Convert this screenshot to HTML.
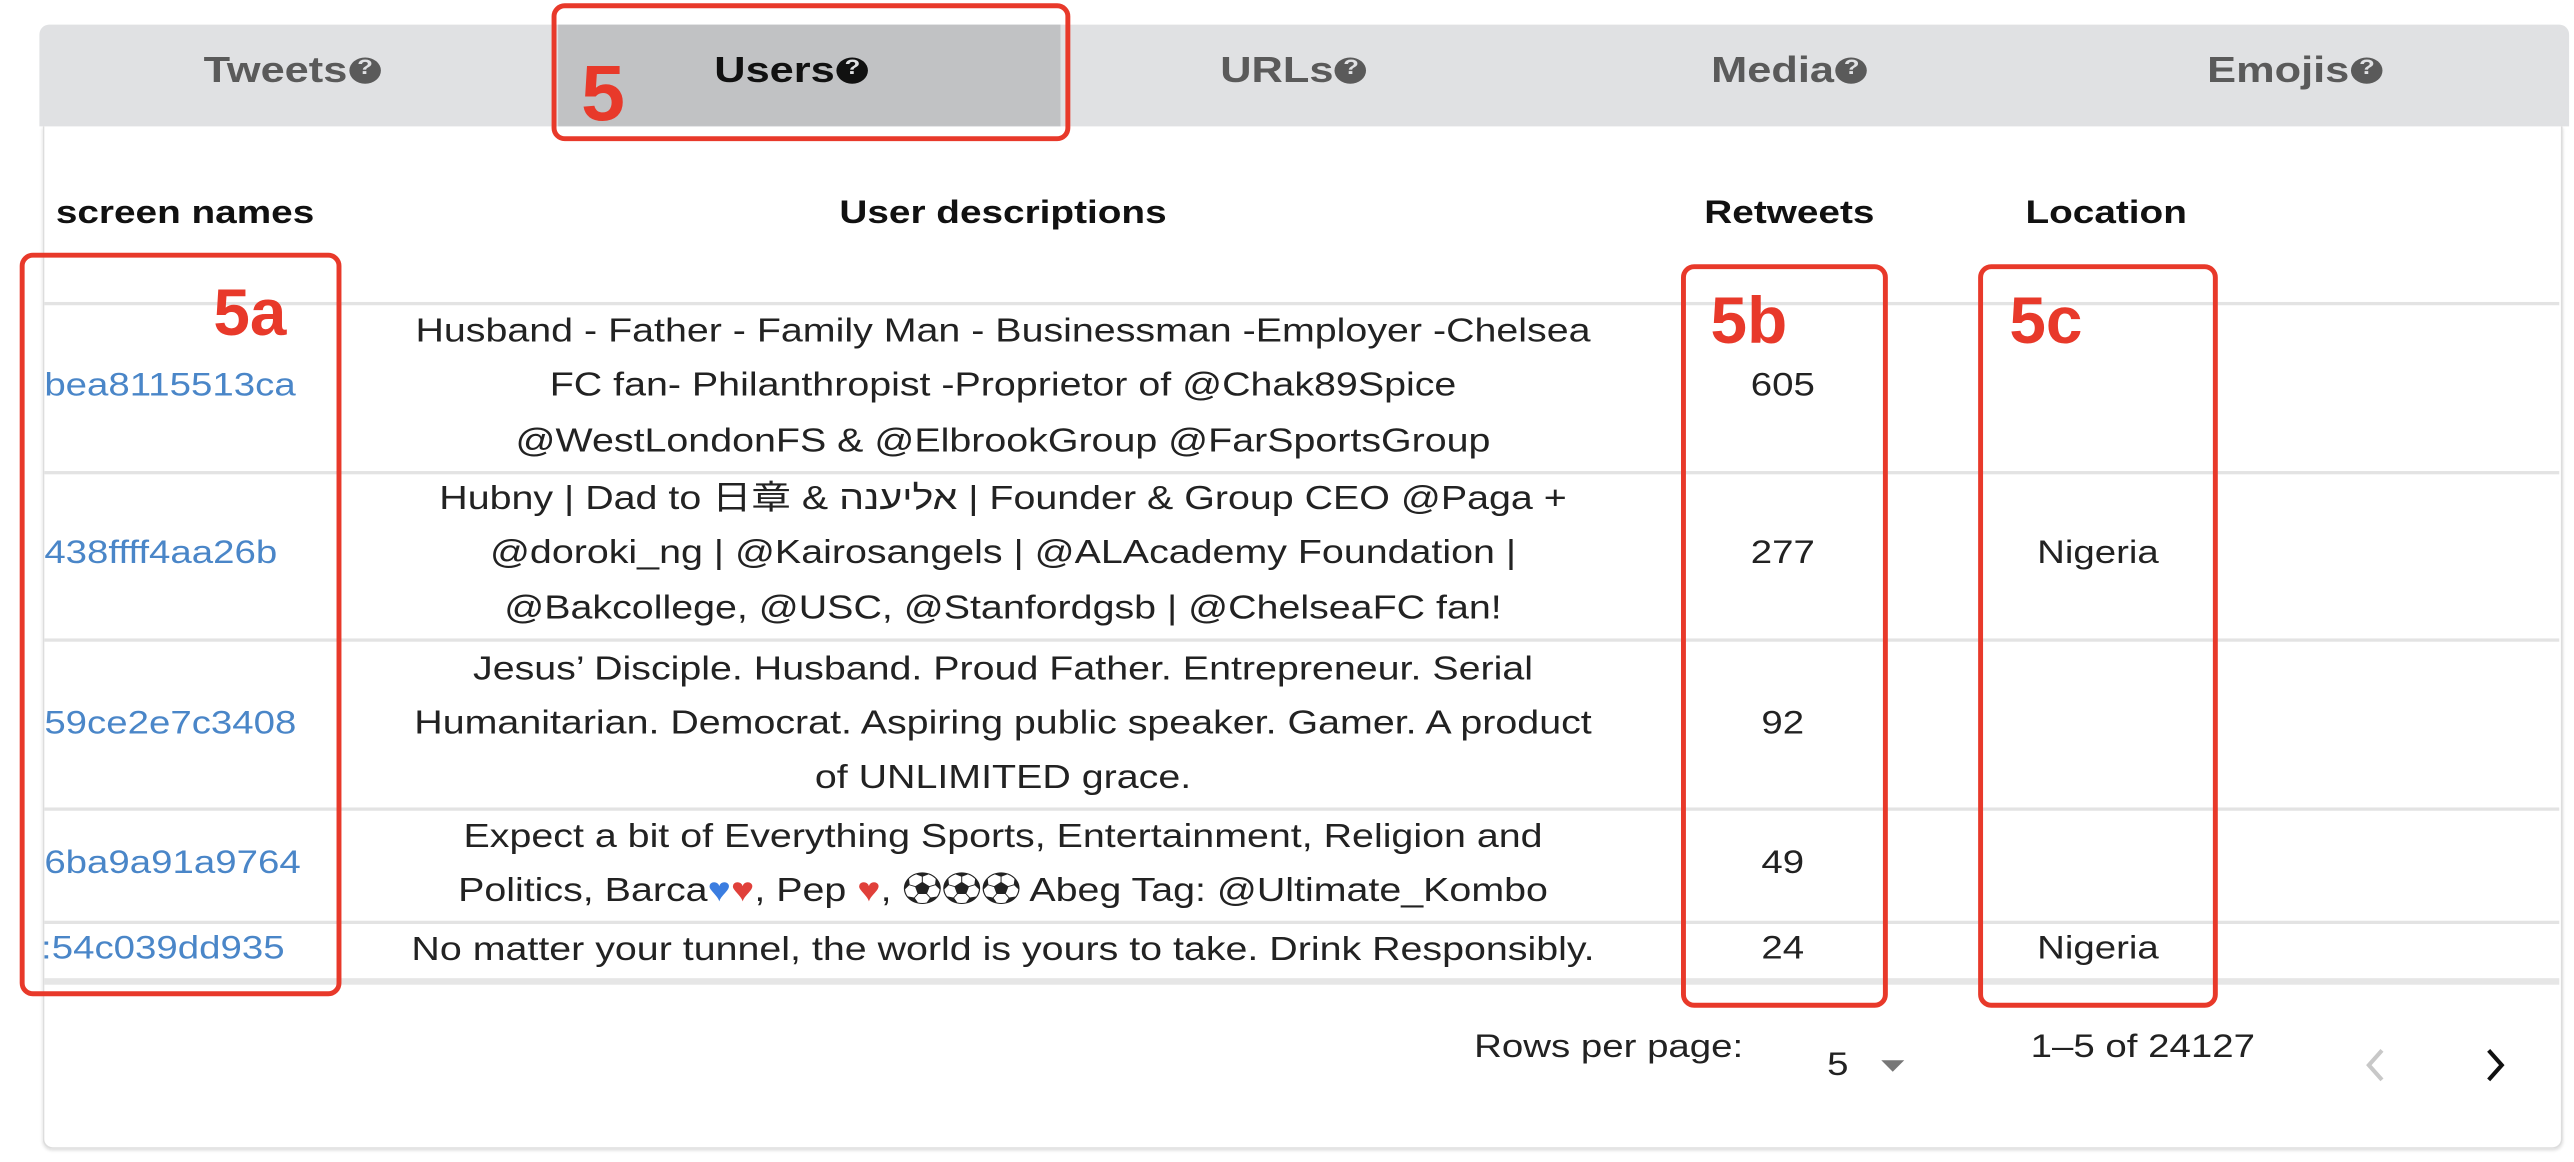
<!DOCTYPE html>
<html><head><meta charset="utf-8"><style>
html,body{margin:0;padding:0;background:#fff;overflow:hidden}
body{width:2574px;height:1162px}
#w{position:absolute;left:0;top:0;width:1568px;height:708px;transform:scale(1.6416,1.6412);transform-origin:0 0;font-family:"Liberation Sans","Noto Sans CJK JP","DejaVu Sans",sans-serif;color:#222}
#w div{line-height:1.15}
.a{position:absolute;white-space:nowrap}
.tab{position:absolute;top:30px;font-weight:bold;font-size:22px;color:#5a5a5a;transform:translateX(-50%) scaleX(1.2)}
.q{display:inline-block;width:16px;height:16px;border-radius:50%;background:currentColor;vertical-align:-1px;margin-left:1px;position:relative}
.q:after{content:"?";position:absolute;left:0;right:0;top:-1px;text-align:center;font-size:13px;color:#e0e1e3;font-weight:bold}
.th{position:absolute;top:119px;font-weight:bold;font-size:20px;color:#111;white-space:nowrap;transform:translateX(-50%) scaleX(1.18)}
.d{position:absolute;left:226px;width:770px;text-align:center;font-size:20.5px;white-space:nowrap;color:#222;transform:scaleX(1.17)}
.l{position:absolute;left:27px;font-size:20px;color:#4a86c8;white-space:nowrap;transform:scaleX(1.17);transform-origin:0 0}
.n{position:absolute;font-size:20px;width:100px;text-align:center;white-space:nowrap;transform:scaleX(1.17)}
.p{transform:scaleX(1.17);transform-origin:0 0}
.hr{position:absolute;left:27px;width:1532px;height:2px;background:#e3e3e3}
.rb{position:absolute;border:3px solid #e8392a;border-radius:8px;box-sizing:border-box}
.rl{position:absolute;color:#e8392a;font-weight:bold;font-size:40px;line-height:1}
</style></head><body><div id="w">
<div class="a" style="left:24px;top:15px;width:1541px;height:62px;background:#e0e1e3;border-radius:6px 6px 0 0"></div>
<div class="a" style="left:340px;top:15px;width:306px;height:62px;background:#c1c2c4"></div>
<div class="tab" style="left:178px">Tweets<span class="q"></span></div>
<div class="tab" style="left:482px;color:#111">Users<span class="q" style="color:#111"></span></div>
<div class="tab" style="left:788px">URLs<span class="q"></span></div>
<div class="tab" style="left:1090px">Media<span class="q"></span></div>
<div class="tab" style="left:1398px">Emojis<span class="q"></span></div>
<div class="a" style="left:26px;top:77px;width:1533px;height:622px;border:1px solid #ddd;border-top:none;border-radius:0 0 6px 6px;box-shadow:0 1px 2px #ddd"></div>

<div class="th" style="left:34px;transform:scaleX(1.18);transform-origin:0 0">screen names</div>
<div class="th" style="left:611px">User descriptions</div>
<div class="th" style="left:1090px">Retweets</div>
<div class="th" style="left:1283px">Location</div>

<div class="hr" style="top:184px"></div>
<div class="hr" style="top:287px"></div>
<div class="hr" style="top:389px"></div>
<div class="hr" style="top:492px"></div>
<div class="hr" style="top:561px"></div>
<div class="hr" style="top:596px;height:4px;background:#e6e6e6"></div>

<div class="l" style="top:224px">bea8115513ca</div>
<div class="d" style="top:190px">Husband - Father - Family Man - Businessman -Employer -Chelsea</div>
<div class="d" style="top:223px">FC fan- Philanthropist -Proprietor of @Chak89Spice</div>
<div class="d" style="top:257px">@WestLondonFS &amp; @ElbrookGroup @FarSportsGroup</div>
<div class="n" style="left:1036px;top:224px">605</div>

<div class="l" style="top:326px">438ffff4aa26b</div>
<div class="d" style="top:292px">Hubny | Dad to 日章 &amp; <span dir="rtl">אליענה</span> | Founder &amp; Group CEO @Paga +</div>
<div class="d" style="top:325px">@doroki_ng | @Kairosangels | @ALAcademy Foundation |</div>
<div class="d" style="top:359px">@Bakcollege, @USC, @Stanfordgsb | @ChelseaFC fan!</div>
<div class="n" style="left:1036px;top:326px">277</div>
<div class="n" style="left:1228px;top:326px">Nigeria</div>

<div class="l" style="top:430px">59ce2e7c3408</div>
<div class="d" style="top:396px">Jesus’ Disciple. Husband. Proud Father. Entrepreneur. Serial</div>
<div class="d" style="top:429px">Humanitarian. Democrat. Aspiring public speaker. Gamer. A product</div>
<div class="d" style="top:462px">of UNLIMITED grace.</div>
<div class="n" style="left:1036px;top:430px">92</div>

<div class="l" style="top:515px">6ba9a91a9764</div>
<div class="d" style="top:498px">Expect a bit of Everything Sports, Entertainment, Religion and</div>
<div class="d" style="top:531px">Politics, Barca<span style="color:#3b7de0">♥</span><span style="color:#e0403a">♥</span>, Pep <span style="color:#e0403a">♥</span>, ⚽⚽⚽ Abeg Tag: @Ultimate_Kombo</div>
<div class="n" style="left:1036px;top:515px">49</div>

<div class="l" style="top:567px;left:25px">:54c039dd935</div>
<div class="d" style="top:567px">No matter your tunnel, the world is yours to take. Drink Responsibly.</div>
<div class="n" style="left:1036px;top:567px">24</div>
<div class="n" style="left:1228px;top:567px">Nigeria</div>

<div class="a p" style="left:898px;top:627px;font-size:20px;color:#222">Rows per page:</div>
<div class="a p" style="left:1113px;top:638px;font-size:20px;color:#222">5</div>
<div class="a" style="left:1146px;top:646px;width:0;height:0;border-left:7px solid transparent;border-right:7px solid transparent;border-top:7px solid #777"></div>
<div class="a p" style="left:1237px;top:627px;font-size:20px;color:#222">1–5 of 24127</div>
<svg class="a" style="left:1438px;top:637px" width="20" height="24" viewBox="0 0 20 24"><path d="M13 3 L5 12 L13 21" fill="none" stroke="#c8c8c8" stroke-width="2.5"/></svg>
<svg class="a" style="left:1510px;top:637px" width="20" height="24" viewBox="0 0 20 24"><path d="M6 3 L14 12 L6 21" fill="none" stroke="#111" stroke-width="2.5"/></svg>

<div class="rb" style="left:336px;top:2px;width:316px;height:84px"></div>
<div class="rl" style="left:354px;top:30px;font-size:48px">5</div>
<div class="rb" style="left:12px;top:154px;width:196px;height:453px"></div>
<div class="rl" style="left:130px;top:168px">5a</div>
<div class="rb" style="left:1024px;top:161px;width:126px;height:453px"></div>
<div class="rl" style="left:1042px;top:173px">5b</div>
<div class="rb" style="left:1205px;top:161px;width:146px;height:453px"></div>
<div class="rl" style="left:1224px;top:173px">5c</div>
</div></body></html>
